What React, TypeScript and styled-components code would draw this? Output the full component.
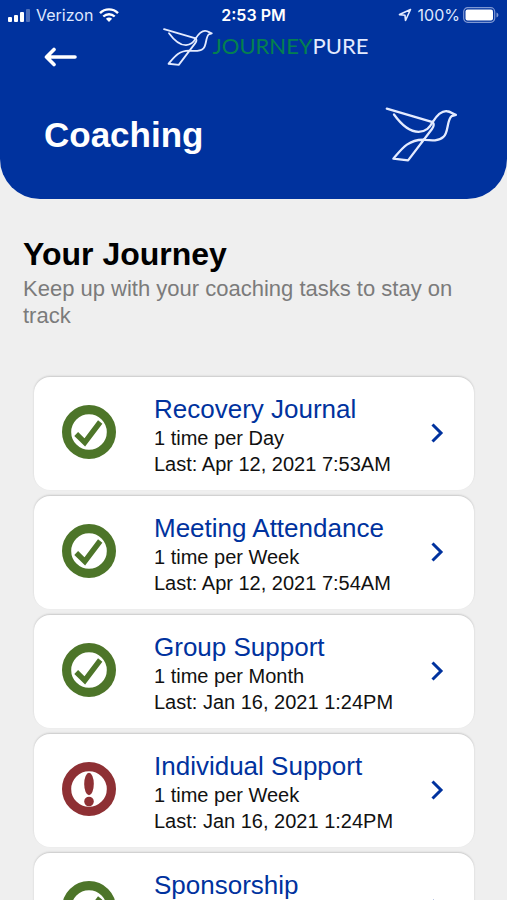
import React from "react";
import styled, { createGlobalStyle } from "styled-components";

const BLUE = "#00329e";
const GREEN = "#4d7529";
const RED = "#8e3034";

const GlobalStyle = createGlobalStyle`
  * { box-sizing: border-box; }
  body {
    margin: 0;
    background: #efefef;
    font-family: "Liberation Sans", Arial, sans-serif;
  }
`;

const Screen = styled.div`
  height: 100vh;
  overflow-y: auto;
  scrollbar-width: none;
  background: #efefef;
`;

const Header = styled.header`
  background: ${BLUE};
  color: #fff;
  border-radius: 0 0 40px 40px;
`;

const StatusBar = styled.div`
  display: grid;
  grid-template-columns: 1fr auto 1fr;
  align-items: center;
  height: 28px;
  padding: 2px 8px 0;
  font: 400 16px/20px Inter, sans-serif;
  color: #dfe8ff;
`;

const StatusGroup = styled.div<{ $end?: boolean }>`
  display: flex;
  align-items: center;
  gap: 6px;
  justify-content: ${(p) => (p.$end ? "flex-end" : "flex-start")};
`;

const BatteryLevel = styled.span`
  display: flex;
  align-items: center;
  gap: 3px;
`;

const Clock = styled.time`
  font-weight: 600;
  color: #fff;
`;

const NavBar = styled.nav`
  display: grid;
  grid-template-columns: 1fr auto 1fr;
  height: 44px;
  padding: 0 20px 0 44px;
`;

const BackButton = styled.button`
  justify-self: start;
  align-self: end;
  display: flex;
  padding: 4px 0;
  border: 0;
  background: none;
  color: #fff;
  cursor: pointer;
`;

const Brand = styled.a`
  display: flex;
  align-items: flex-start;
  color: #e4ebff;
  text-decoration: none;
  font: 400 22px/36px Lato, sans-serif;
`;

const BrandAccent = styled.span`
  color: #04804f;
`;

const TitleRow = styled.div`
  display: flex;
  align-items: center;
  justify-content: space-between;
  padding: 35px 49px 37px 44px;
`;

const PageTitle = styled.h1`
  margin: 0;
  font-size: 35px;
  line-height: 40px;
`;

const Intro = styled.section`
  padding: 35px 23px 0;
`;

const Heading = styled.h2`
  margin: 0;
  font-size: 32px;
  line-height: 41px;
  color: #000;
`;

const Lead = styled.p`
  margin: 0;
  font-size: 22px;
  line-height: 27px;
  color: #7b7b7b;
`;

const TaskList = styled.ul`
  list-style: none;
  margin: 0;
  padding: 48px 33px 24px 34px;
  display: grid;
  gap: 6px;
`;

const TaskCard = styled.a`
  display: grid;
  grid-template-columns: 92px 1fr 20px;
  align-items: center;
  min-height: 113px;
  padding: 0 27px 4px 28px;
  border-radius: 16px;
  background: #fff;
  box-shadow: 0 -1px 2px rgba(0, 0, 0, 0.16);
  color: #111;
  text-decoration: none;
`;

const TaskText = styled.div`
  align-self: start;
  padding: 17px 0 9px;
`;

const TaskName = styled.h3`
  margin: 0;
  font-size: 26px;
  font-weight: 400;
  line-height: 31px;
  color: ${BLUE};
`;

const TaskLine = styled.p`
  margin: 0;
  font-size: 20px;
  line-height: 26px;
  white-space: nowrap;
`;

const Bird = ({ width, stroke }: { width: number; stroke: number }) => (
  <svg width={width} height={Math.round(width * 0.75)} viewBox="44 49 220 168" fill="none"
    stroke="#e4ebff" strokeWidth={stroke} strokeLinecap="round" strokeLinejoin="round" aria-hidden="true">
    <path d="M48 54 L188 95 C200 76 216 60 232 62 C243 63 247 69 259 73 L246 77 C231 89 237 127 221 140 C205 155 181 151 158 149 C111 149 91 181 68 207 L113 212 L186 116 C194 106 192 100 188 95" />
    <path d="M70 72 C91 101 116 125 145 125 C169 123 179 112 188 95" />
  </svg>
);

const Signal = () => (
  <svg width="22" height="13" viewBox="0 0 22 13" fill="#fff" aria-hidden="true">
    <rect x="0" y="8" width="4" height="5" rx="1" />
    <rect x="6" y="6" width="4" height="7" rx="1" />
    <rect x="12" y="3" width="4" height="10" rx="1" />
    <rect x="18" y="0" width="4" height="13" rx="1" opacity=".3" />
  </svg>
);

const Wifi = () => (
  <svg width="20" height="14" viewBox="0 0 20 14" fill="none" stroke="#fff" strokeWidth="2.4" aria-hidden="true">
    <path d="M1 5.2 C6 .1 14 .1 19 5.2" />
    <path d="M4.3 8.5 C7.6 5.4 12.4 5.4 15.7 8.5" />
    <path d="M10 14 L6.9 10.8 C8.7 9.2 11.3 9.2 13.1 10.8 Z" fill="#fff" stroke="none" />
  </svg>
);

const Location = () => (
  <svg width="14" height="14" viewBox="0 0 14 14" fill="none" stroke="#e4ebff" strokeWidth="1.6" strokeLinejoin="round" aria-hidden="true">
    <path d="M12.5 1.5 L1.5 6.6 L7 7.3 L7.5 12.5 Z" />
  </svg>
);

const Battery = () => (
  <svg width="36" height="16" viewBox="0 0 36 16" aria-hidden="true">
    <rect x=".7" y=".7" width="31" height="14.6" rx="4" fill="none" stroke="#7f98d3" strokeWidth="1.2" />
    <rect x="2.5" y="2.5" width="27.5" height="11" rx="2" fill="#fff" />
    <path d="M33.5 5.5 C36 6.5 36 9.5 33.5 10.5 Z" fill="#7f98d3" />
  </svg>
);

const BackArrow = () => (
  <svg width="34" height="22" viewBox="0 0 34 22" fill="none" stroke="currentColor" strokeWidth="3.6" strokeLinecap="round" strokeLinejoin="round" aria-hidden="true">
    <path d="M31 11 H3 M10 3.5 L2.5 11 L10 18.5" />
  </svg>
);

const Chevron = () => (
  <svg width="20" height="24" viewBox="0 0 20 24" fill="none" stroke={BLUE} strokeWidth="3" aria-hidden="true">
    <path d="M5.5 4.5 L14 13 L5.5 21.5" />
  </svg>
);

const StatusIcon = ({ done }: { done: boolean }) => (
  <svg width="54" height="54" viewBox="0 0 54 54" role="img" aria-label={done ? "Completed" : "Overdue"}>
    <circle cx="27" cy="27" r="22.4" fill="none" stroke={done ? GREEN : RED} strokeWidth="9.2" />
    {done ? (
      <path d="M14.2 29 L22.8 37.4 L38.2 17" fill="none" stroke={GREEN} strokeWidth="5.4" />
    ) : (
      <g fill={RED}>
        <ellipse cx="27" cy="22" rx="4.8" ry="11.3" />
        <circle cx="27" cy="39.5" r="4.8" />
      </g>
    )}
  </svg>
);

type Task = { name: string; done: boolean; frequency?: string; last?: string };

const tasks: Task[] = [
  { name: "Recovery Journal", frequency: "1 time per Day", last: "Apr 12, 2021 7:53AM", done: true },
  { name: "Meeting Attendance", frequency: "1 time per Week", last: "Apr 12, 2021 7:54AM", done: true },
  { name: "Group Support", frequency: "1 time per Month", last: "Jan 16, 2021 1:24PM", done: true },
  { name: "Individual Support", frequency: "1 time per Week", last: "Jan 16, 2021 1:24PM", done: false },
  { name: "Sponsorship", done: true },
];

export default function App() {
  return (
    <Screen>
      <GlobalStyle />
      <Header>
        <StatusBar>
          <StatusGroup>
            <Signal />
            <span>Verizon</span>
            <Wifi />
          </StatusGroup>
          <Clock>2:53 PM</Clock>
          <StatusGroup $end>
            <Location />
            <BatteryLevel>100%<Battery /></BatteryLevel>
          </StatusGroup>
        </StatusBar>
        <NavBar>
          <BackButton aria-label="Back"><BackArrow /></BackButton>
          <Brand href="#">
            <Bird width={50} stroke={8} />
            <span><BrandAccent>JOURNEY</BrandAccent>PURE</span>
          </Brand>
        </NavBar>
        <TitleRow>
          <PageTitle>Coaching</PageTitle>
          <Bird width={73} stroke={7} />
        </TitleRow>
      </Header>
      <main>
        <Intro>
          <Heading>Your Journey</Heading>
          <Lead>Keep up with your coaching tasks to stay on track</Lead>
        </Intro>
        <TaskList>
          {tasks.map((t) => (
            <li key={t.name}>
              <TaskCard href="#">
                <StatusIcon done={t.done} />
                <TaskText>
                  <TaskName>{t.name}</TaskName>
                  {t.frequency && <TaskLine>{t.frequency}</TaskLine>}
                  {t.last && <TaskLine>Last: {t.last}</TaskLine>}
                </TaskText>
                <Chevron />
              </TaskCard>
            </li>
          ))}
        </TaskList>
      </main>
    </Screen>
  );
}
